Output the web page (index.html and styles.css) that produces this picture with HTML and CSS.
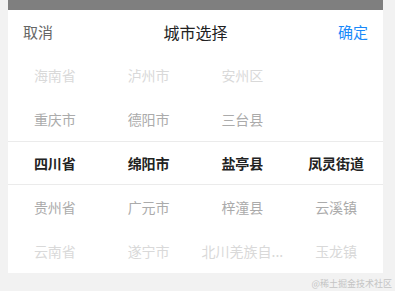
FILE: index.html
```html
<!DOCTYPE html>
<html lang="zh-CN">
<head>
    <meta charset="UTF-8">
    <meta name="viewport" content="width=device-width, initial-scale=1.0">
    <title>城市选择</title>
    <link rel="stylesheet" href="styles.css">
</head>
<body>
    <div class="page">
        <div class="mask-bar"></div>
        <div class="picker">
            <!-- Toolbar -->
            <div class="picker-header">
                <span class="btn-cancel">取消</span>
                <span class="picker-title">城市选择</span>
                <span class="btn-confirm">确定</span>
            </div>

            <!-- Columns -->
            <div class="picker-body">
                <div class="picker-row far">
                    <span>海南省</span><span>泸州市</span><span>安州区</span><span></span>
                </div>
                <div class="picker-row near">
                    <span>重庆市</span><span>德阳市</span><span>三台县</span><span></span>
                </div>
                <div class="picker-row selected">
                    <span>四川省</span><span>绵阳市</span><span>盐亭县</span><span>凤灵街道</span>
                </div>
                <div class="picker-row near">
                    <span>贵州省</span><span>广元市</span><span>梓潼县</span><span>云溪镇</span>
                </div>
                <div class="picker-row far">
                    <span>云南省</span><span>遂宁市</span><span title="北川羌族自治县">北川羌族自...</span><span>玉龙镇</span>
                </div>
            </div>
        </div>
        <div class="watermark">@稀土掘金技术社区</div>
    </div>
</body>
</html>
```

FILE: styles.css
```css
* {
    margin: 0;
    padding: 0;
    box-sizing: border-box;
}

body {
    font-family: "Noto Sans CJK SC", "Noto Sans", sans-serif;
    background-color: #f2f2f2;
    width: 395px;
    height: 291px;
    overflow: hidden;
}

.page {
    width: 375px;
    margin-left: 8px;
}

.mask-bar {
    height: 10px;
    background-color: #7f7f7f;
}

.picker {
    background-color: #fff;
}

.picker-header {
    height: 43px;
    display: flex;
    align-items: center;
    justify-content: space-between;
    padding: 0 15px;
    font-size: 15px;
}

.btn-cancel {
    color: #666;
}

.picker-title {
    color: #222;
    font-size: 16px;
}

.btn-confirm {
    color: #1989fa;
}

.picker-row {
    height: 44px;
    display: grid;
    grid-template-columns: repeat(4, 1fr);
    align-items: center;
    font-size: 14px;
    text-align: center;
}

.picker-row span {
    white-space: nowrap;
}

.picker-row.far {
    color: #d9d9d9;
}

.picker-row.near {
    color: #ababab;
}

.picker-row.selected {
    color: #222;
    font-weight: bold;
    border-top: 1px solid #ebebeb;
    border-bottom: 1px solid #ebebeb;
}

.watermark {
    text-align: right;
    margin-right: -9px;
    padding-top: 4px;
    font-size: 9px;
    color: #c4c4c4;
}
```
